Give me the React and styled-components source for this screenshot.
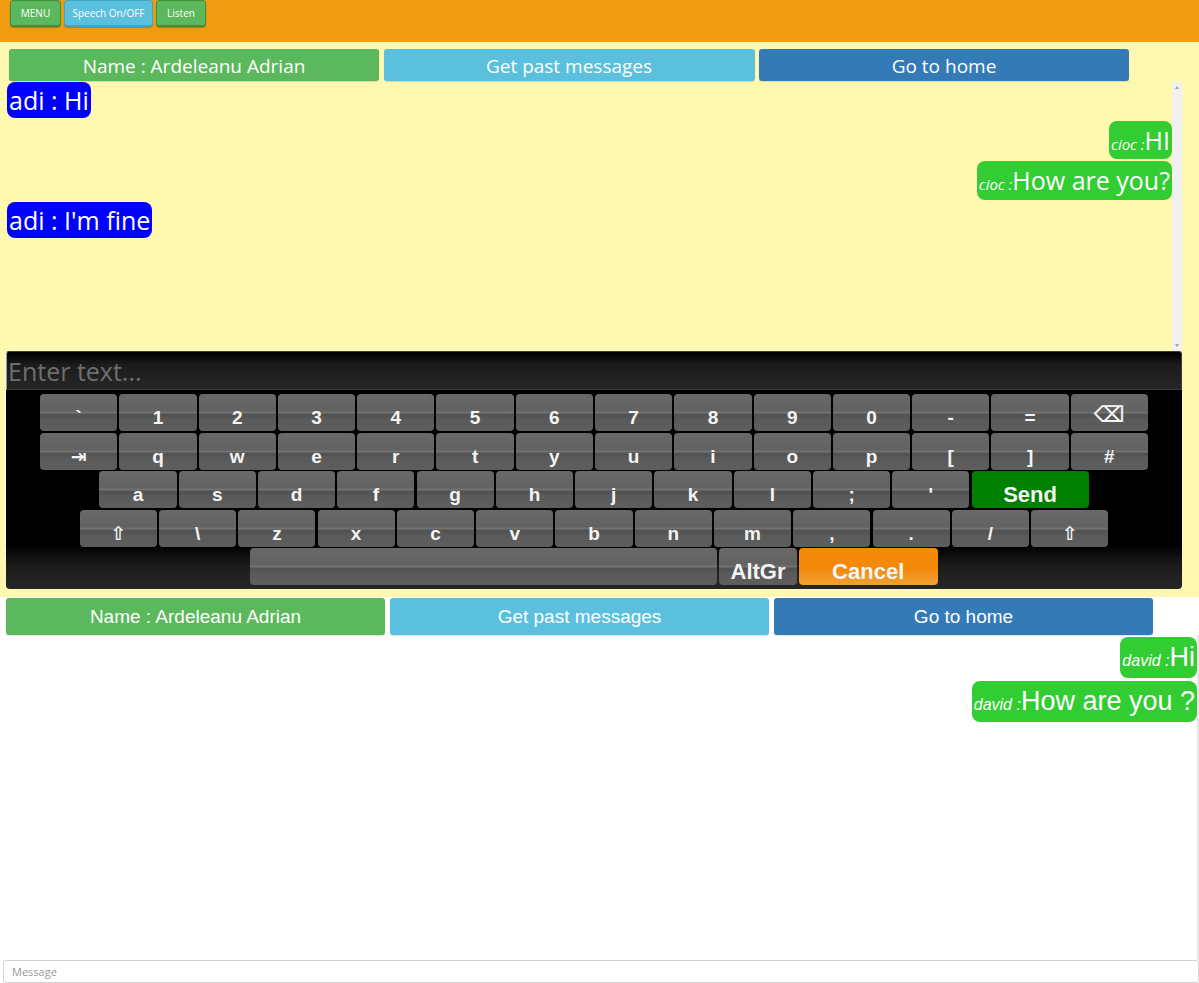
import React from 'react';
import styled, { createGlobalStyle } from 'styled-components';

const Global = createGlobalStyle`
  html, body { margin: 0; padding: 0; background: #ffffff; }
  body { font-family: "Open Sans", "Noto Sans", sans-serif; }
  * { box-sizing: border-box; }
`;

const Page = styled.div`
  width: 1199px;
`;

const TopBar = styled.header`
  height: 42px;
  background: #ef9c12;
  display: flex;
  align-items: flex-start;
  gap: 3px;
  padding-left: 10px;
`;

const TopButton = styled.button`
  width: ${p => p.$w}px;
  height: 27px;
  padding: 0;
  border: 1px solid ${p => p.$border};
  border-bottom-width: 2px;
  border-radius: 4px;
  background: ${p => p.$bg};
  color: #fff;
  font: 10px "Open Sans", sans-serif;
  box-shadow: 0 1px 1px rgba(0,0,0,0.25);
`;

const Upper = styled.section`
  background: #fff8b0;
  padding: 7px 0 8px;
`;

const NavRow = styled.div`
  display: flex;
  gap: ${p => p.$gap}px;
  padding-left: ${p => p.$left}px;
`;

const NavButton = styled.button`
  width: ${p => p.$w}px;
  height: ${p => p.$h}px;
  border: none;
  border-radius: 3px;
  background: ${p => p.$bg};
  color: #fff;
  font-size: 19px;
  font-family: ${p => p.$font};
  box-shadow: 0 1px 1px rgba(0,0,0,0.12);
  padding: ${p => p.$pt || 0}px 0 0;
`;

const ChatBox = styled.div`
  margin: 1px 0 0 6px;
  width: 1176px;
  height: 269px;
  display: flex;
`;

const MessageList = styled.div`
  flex: 1;
  padding-left: 1px;
  overflow: hidden;
`;

const ScrollTrack = styled.div`
  width: 10px;
  background: #f1f1f1;
  display: flex;
  flex-direction: column;
  justify-content: space-between;
  align-items: center;
  padding: 4px 0;
`;

const Arrow = styled.span`
  width: 0;
  height: 0;
  border-left: 2.5px solid transparent;
  border-right: 2.5px solid transparent;
  ${p => (p.$down ? 'border-top: 3px solid #a3a3a3;' : 'border-bottom: 3px solid #a3a3a3;')}
`;

const MsgRow = styled.div`
  display: flex;
  justify-content: ${p => (p.$right ? 'flex-end' : 'flex-start')};
  margin-bottom: ${p => p.$mb}px;
`;

const Bubble = styled.div`
  display: inline-block;
  background: ${p => p.$bg};
  color: #fff;
  border-radius: 8px;
  padding: 0 2px;
  height: ${p => p.$h}px;
  line-height: ${p => p.$h}px;
  font-size: ${p => p.$size}px;
  font-family: ${p => p.$font};
  white-space: nowrap;
`;

const Sender = styled.span`
  font-style: italic;
  font-size: ${p => p.$size}px;
`;

const Keyboard = styled.div`
  margin-left: 6px;
  width: 1176px;
`;

const TextField = styled.div`
  height: 39px;
  background: linear-gradient(to bottom, #000 0%, #1c1c1c 35%, #262626 100%);
  border: 1px solid #3c3c3c;
  border-left-color: #8aa0b8;
  border-radius: 3px 3px 0 0;
  color: #6f6f6f;
  font-size: 25px;
  line-height: 39px;
  padding-left: 1px;
`;

const KeyArea = styled.div`
  height: 199px;
  background: linear-gradient(to bottom, #000 0%, #000 78%, #1b1b1b 88%, #262626 100%);
  border-radius: 0 0 4px 4px;
  padding-top: 4px;
  display: flex;
  flex-direction: column;
  align-items: center;
  gap: 1.5px;
`;

const KeyRow = styled.div`
  display: flex;
  gap: 2.1px;
`;

const Key = styled.div`
  width: ${p => p.$w || 77.2}px;
  height: 37px;
  border-radius: 4px;
  background: ${p => p.$bg || 'linear-gradient(to bottom, #696969 0%, #626262 45%, #727272 50%, #505050 56%, #5a5a5a 68%, #5e5e5e 100%)'};
  color: #f4f4f4;
  font-family: "Liberation Sans", "DejaVu Sans", Arial, sans-serif;
  font-weight: bold;
  font-size: ${p => p.$size || 19}px;
  text-align: center;
  line-height: 24px;
  padding-top: ${p => p.$pt || 12}px;
`;

const Lower = styled.section`
  padding-top: 1px;
`;

const LowerChat = styled.div`
  height: 325px;
  width: 1199px;
  border-right: 2px solid #e8e8e8;
  padding-top: 2px;
`;

const MessageInput = styled.input`
  display: block;
  margin-left: 3px;
  width: 1196px;
  height: 23px;
  border: 1px solid #d2d2d2;
  border-radius: 3px;
  padding: 0 8px;
  font: 11px "Open Sans", sans-serif;
  color: #555;
  &::placeholder { color: #999; }
`;

const row1 = ['`', '1', '2', '3', '4', '5', '6', '7', '8', '9', '0', '-', '=', '⌫'];
const row2 = ['⇥', 'q', 'w', 'e', 'r', 't', 'y', 'u', 'i', 'o', 'p', '[', ']', '#'];
const row3 = ['a', 's', 'd', 'f', 'g', 'h', 'j', 'k', 'l', ';', "'"];
const row4 = ['⇧', '\\', 'z', 'x', 'c', 'v', 'b', 'n', 'm', ',', '.', '/', '⇧'];

const UBU = '"Open Sans", sans-serif';
const ARIAL = '"Liberation Sans", Arial, sans-serif';

export default function App() {
  return (
    <Page>
      <Global />
      <TopBar>
        <TopButton $w={51} $bg="#5cb85c" $border="#3f8f3f">MENU</TopButton>
        <TopButton $w={89} $bg="#5bc0de" $border="#3fa6c4">Speech On/OFF</TopButton>
        <TopButton $w={50} $bg="#5cb85c" $border="#3f8f3f">Listen</TopButton>
      </TopBar>

      <Upper>
        <NavRow $gap={4.5} $left={9}>
          <NavButton $w={370} $h={32} $pt={2} $bg="#5cb85c" $font={UBU}>Name : Ardeleanu Adrian</NavButton>
          <NavButton $w={371} $h={32} $pt={2} $bg="#5bc0de" $font={UBU}>Get past messages</NavButton>
          <NavButton $w={370} $h={32} $pt={2} $bg="#337ab7" $font={UBU}>Go to home</NavButton>
        </NavRow>

        <ChatBox>
          <MessageList>
            <MsgRow $mb={3}>
              <Bubble $bg="#0000ff" $h={36} $size={25} $font={UBU}>adi : Hi</Bubble>
            </MsgRow>
            <MsgRow $right $mb={2}>
              <Bubble $bg="#32cd32" $h={38} $size={25} $font={UBU}><Sender $size={15}>cioc :</Sender>HI</Bubble>
            </MsgRow>
            <MsgRow $right $mb={2}>
              <Bubble $bg="#32cd32" $h={39} $size={25} $font={UBU}><Sender $size={15}>cioc :</Sender>How are you?</Bubble>
            </MsgRow>
            <MsgRow $mb={2}>
              <Bubble $bg="#0000ff" $h={36} $size={25} $font={UBU}>adi : I'm fine</Bubble>
            </MsgRow>
          </MessageList>
          <ScrollTrack>
            <Arrow />
            <Arrow $down />
          </ScrollTrack>
        </ChatBox>

        <Keyboard>
          <TextField>Enter text...</TextField>
          <KeyArea>
            <KeyRow>{row1.map((k, i) => <Key key={i} $size={k === '⌫' ? 22 : 19} $pt={k === '⌫' ? 9 : 12}>{k}</Key>)}</KeyRow>
            <KeyRow>{row2.map((k, i) => <Key key={i}>{k}</Key>)}</KeyRow>
            <KeyRow>
              {row3.map((k, i) => <Key key={i}>{k}</Key>)}
              <Key $w={117} $size={22} $bg="#008000">Send</Key>
            </KeyRow>
            <KeyRow>{row4.map((k, i) => <Key key={i}>{k}</Key>)}</KeyRow>
            <KeyRow>
              <Key $w={467} />
              <Key $size={22}>AltGr</Key>
              <Key $w={139} $size={22} $bg="linear-gradient(to bottom, #f58a08 0%, #f38a0a 55%, #f2a036 100%)">Cancel</Key>
            </KeyRow>
          </KeyArea>
        </Keyboard>
      </Upper>

      <Lower>
        <NavRow $gap={5} $left={6}>
          <NavButton $w={379} $h={37} $bg="#5cb85c" $font={ARIAL}>Name : Ardeleanu Adrian</NavButton>
          <NavButton $w={379} $h={37} $bg="#5bc0de" $font={ARIAL}>Get past messages</NavButton>
          <NavButton $w={379} $h={37} $bg="#337ab7" $font={ARIAL}>Go to home</NavButton>
        </NavRow>
        <LowerChat>
          <MsgRow $right $mb={3}>
            <Bubble $bg="#32cd32" $h={41} $size={27} $font={ARIAL}><Sender $size={16}>david :</Sender>Hi</Bubble>
          </MsgRow>
          <MsgRow $right $mb={3}>
            <Bubble $bg="#32cd32" $h={41} $size={27} $font={ARIAL}><Sender $size={16}>david :</Sender>How are you ?</Bubble>
          </MsgRow>
        </LowerChat>
        <MessageInput placeholder="Message" />
      </Lower>
    </Page>
  );
}
